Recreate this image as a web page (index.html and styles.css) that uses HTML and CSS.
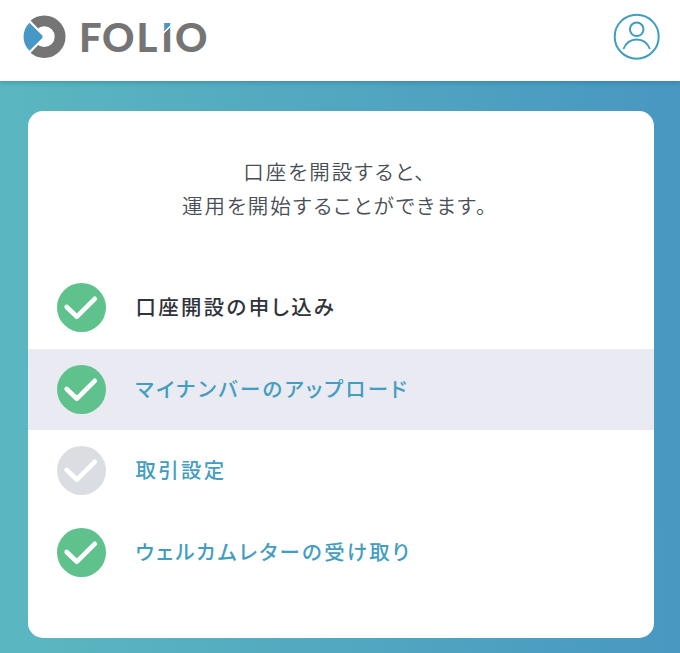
FILE: index.html
```html
<!DOCTYPE html>
<html lang="ja">
<head>
    <meta charset="UTF-8">
    <title>FOLIO</title>
    <link rel="stylesheet" href="styles.css">
</head>
<body>

    <header class="header">
        <svg class="logo" width="190" height="48" viewBox="20 12 190 48" role="img" aria-label="FOLIO">
            <defs>
                <linearGradient id="tip" gradientUnits="userSpaceOnUse" x1="164" y1="23" x2="170" y2="29">
                    <stop offset="0.72" stop-color="#4798c4"/>
                    <stop offset="0.72" stop-color="#fff"/>
                    <stop offset="0.9" stop-color="#fff"/>
                    <stop offset="0.9" stop-color="#757575"/>
                </linearGradient>
            </defs>
            <circle cx="44.3" cy="36.7" r="15.8" fill="none" stroke="#757575" stroke-width="10.8"/>
            <path d="M30.5 20.5L46 36.7L30.5 53L16 54V19.5Z" fill="#fff"/>
            <path d="M29.5 22.7L42 35.2Q43.3 36.7 42 38.2L29.5 50.7C21.5 43 21.5 30.4 29.5 22.7Z" fill="#4798c4"/>
            <g class="logo-text">
                <text x="79" y="51.5">F</text>
                <text x="102" y="51.5">O</text>
                <text x="136.5" y="51.5">L</text>
                <text x="161" y="51.5" fill="url(#tip)">I</text>
                <text x="175" y="51.5">O</text>
            </g>
        </svg>
        <svg class="user" width="48" height="48" viewBox="0 0 48 48" fill="none" stroke="#3f9dbf" stroke-width="2">
            <circle cx="23.7" cy="24.7" r="22"/>
            <circle cx="23.7" cy="17.3" r="6.8"/>
            <path d="M10.5 37C15.500 24.300 31.900 24.300 36.900 37"/>
        </svg>
    </header>

    <main class="main">
        <div class="card">
            <p class="lead">口座を開設すると、<br>運用を開始することができます。</p>
            <ul class="steps">
                <li class="step">
                    <svg class="check" viewBox="0 0 48 48"><circle cx="24" cy="24" r="24"/><path d="M9.5 23.5L19.5 33L37 15.5"/></svg>
                    <span class="label">口座開設の申し込み</span>
                </li>
                <li class="step active">
                    <svg class="check" viewBox="0 0 48 48"><circle cx="24" cy="24" r="24"/><path d="M9.5 23.5L19.5 33L37 15.5"/></svg>
                    <a class="label link">マイナンバーのアップロード</a>
                </li>
                <li class="step todo">
                    <svg class="check" viewBox="0 0 48 48"><circle cx="24" cy="24" r="24"/><path d="M9.5 23.5L19.5 33L37 15.5"/></svg>
                    <a class="label link">取引設定</a>
                </li>
                <li class="step">
                    <svg class="check" viewBox="0 0 48 48"><circle cx="24" cy="24" r="24"/><path d="M9.5 23.5L19.5 33L37 15.5"/></svg>
                    <a class="label link">ウェルカムレターの受け取り</a>
                </li>
            </ul>
        </div>
    </main>

</body>
</html>
```
FILE: styles.css
```css
* {
    box-sizing: border-box;
}
body {
    margin: 0;
    height: 653px;
    display: flex;
    flex-direction: column;
    overflow: hidden;
    font-family: "Noto Sans CJK JP", sans-serif;
    font-feature-settings: "palt";
    background: linear-gradient(88deg, #5ab6c0 5%, #4998c1 96%);
}
.header {
    height: 81px;
    padding: 12px 19px 0 20px;
    display: flex;
    justify-content: space-between;
    align-items: flex-start;
    background: #fff;
    box-shadow: 0 1px 5px rgba(0, 80, 110, 0.35);
}
.logo-text {
    font-family: Lato, sans-serif;
    font-weight: 900;
    font-size: 40px;
    fill: #757575;
}
.main {
    padding: 30px 26px 0 28px;
}
.card {
    height: 527px;
    padding-top: 44px;
    background: #fff;
    border-radius: 15px;
}
.lead {
    margin: 0 0 45px;
    padding-right: 12px;
    text-align: center;
    font-size: 20.5px;
    font-weight: 350;
    line-height: 33.5px;
    letter-spacing: 2px;
    color: #474e56;
}
.steps {
    margin: 0;
    padding: 0;
    list-style: none;
}
.step {
    height: 81.6px;
    padding-left: 29px;
    display: flex;
    align-items: center;
    gap: 29.5px;
}
.active {
    background: #e9eaf2;
}
.check {
    width: 49px;
    height: 49px;
    fill: #5fc18c;
}
.check path {
    fill: none;
    stroke: #fff;
    stroke-width: 4.6px;
    stroke-linecap: round;
    stroke-linejoin: round;
}
.todo .check {
    fill: #dadde2;
}
.label {
    padding-bottom: 3px;
    font-size: 20.4px;
    font-weight: 500;
    letter-spacing: 2.4px;
    color: #2f343b;
}
.link {
    color: #439dc0;
}
```
